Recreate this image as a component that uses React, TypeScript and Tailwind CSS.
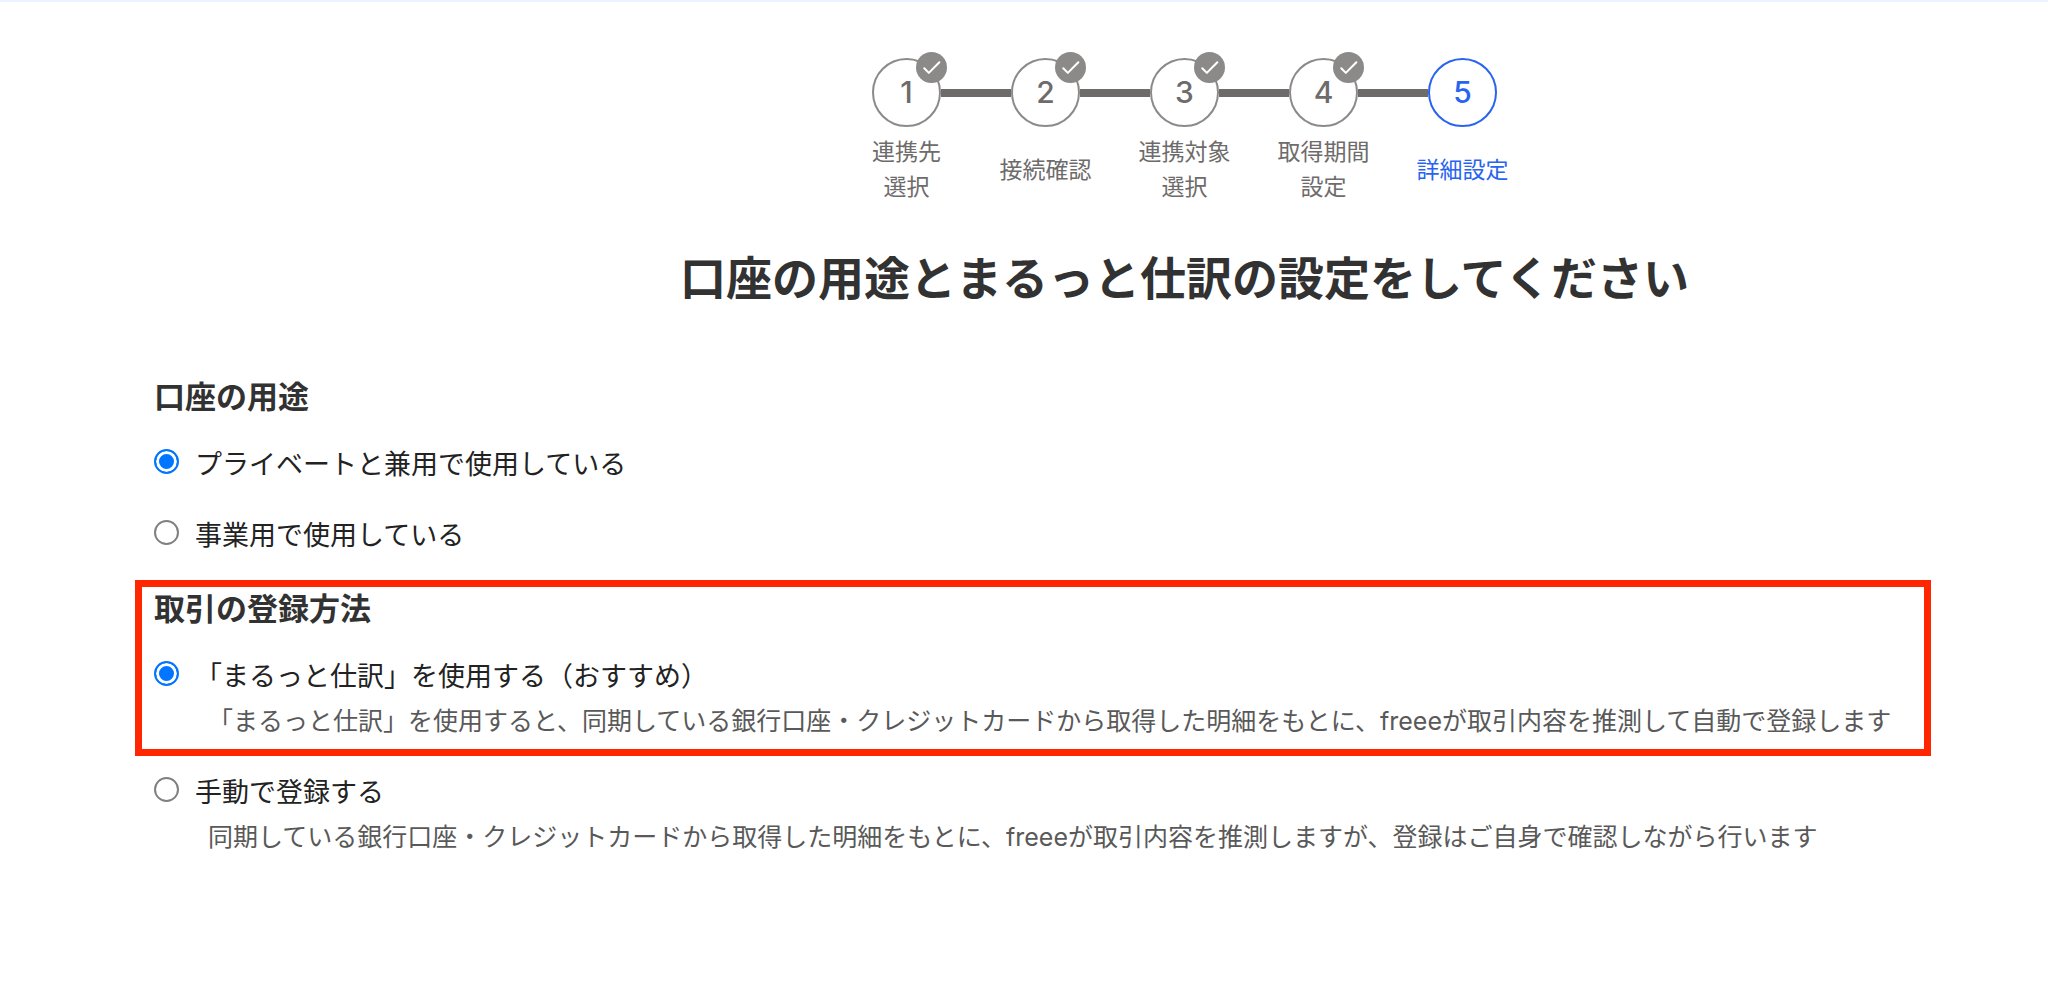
import { ReactNode, useId, useState } from "react";

type Step = { label: string[]; done: boolean };

const steps: Step[] = [
  { label: ["連携先", "選択"], done: true },
  { label: ["接続確認"], done: true },
  { label: ["連携対象", "選択"], done: true },
  { label: ["取得期間", "設定"], done: true },
  { label: ["詳細設定"], done: false },
];

function Brand() {
  return <span className="font-['Inter',sans-serif]">freee</span>;
}

function StepItem({ step, index }: { step: Step; index: number }) {
  const tone = step.done ? "border-[#8c8989] text-[#6e6b6b]" : "border-[#2864f0] text-[#2864f0]";
  return (
    <li
      aria-current={step.done ? undefined : "step"}
      className="flex w-[139px] flex-col items-center gap-1.5"
    >
      <div className="flex w-full items-center">
        <span className={index > 0 ? "h-2 flex-1 bg-[#6e6b6b]" : "h-2 flex-1"} />
        <span
          className={`relative flex size-[69px] items-center justify-center rounded-full border-2 font-['Inter',sans-serif] text-[30px] font-medium ${tone}`}
        >
          {index + 1}
          {step.done && (
            <svg
              viewBox="0 0 30 30"
              aria-hidden="true"
              className="absolute -top-2 -right-2 size-[31px]"
            >
              <circle cx="15" cy="15" r="15" fill="#8c8989" />
              <path
                d="M8 15.8 L12.4 20.2 L22.6 10"
                fill="none"
                stroke="#fff"
                strokeWidth="2"
                strokeLinecap="round"
                strokeLinejoin="round"
              />
            </svg>
          )}
        </span>
        <span className={step.done ? "h-2 flex-1 bg-[#6e6b6b]" : "h-2 flex-1"} />
      </div>
      <span
        className={`flex h-[70px] flex-col items-center justify-center text-[23px] leading-[35px] ${
          step.done ? "text-[#6e6b6b]" : "text-[#2864f0]"
        }`}
      >
        {step.label.map((line) => (
          <span key={line}>{line}</span>
        ))}
      </span>
    </li>
  );
}

type OptionProps = {
  name: string;
  checked: boolean;
  onSelect: () => void;
  label: string;
  children?: ReactNode;
};

function Option({ name, checked, onSelect, label, children }: OptionProps) {
  const id = useId();
  return (
    <div>
      <div className="flex items-center gap-4">
        <input
          type="radio"
          id={id}
          name={name}
          checked={checked}
          onChange={onSelect}
          aria-describedby={children ? `${id}-note` : undefined}
          className="size-[25px] shrink-0 appearance-none rounded-full border-2 border-[#808080] bg-white checked:border-[#0075ff] checked:bg-[#0075ff] checked:shadow-[inset_0_0_0_3px_#fff]"
        />
        <label htmlFor={id} className="pt-1 text-[27px] leading-10 text-[#222222]">
          {label}
        </label>
      </div>
      {children && (
        <p id={`${id}-note`} className="mt-1 pl-[54px] text-[25px] leading-10 text-[#595959]">
          {children}
        </p>
      )}
    </div>
  );
}

export default function App() {
  const [usage, setUsage] = useState("shared");
  const [method, setMethod] = useState("auto");

  return (
    <main className="min-h-screen border-t-2 border-[#ebf1ff] bg-white pt-14 pb-20 font-['Noto_Sans_CJK_JP',sans-serif] text-[#323232]">
      <header className="flex flex-col items-center pl-[321px]">
        <ol className="flex">
          {steps.map((step, i) => (
            <StepItem key={i} step={step} index={i} />
          ))}
        </ol>
        <h1 className="mt-10 text-[46px] leading-[64px] font-bold">
          口座の用途とまるっと仕訳の設定をしてください
        </h1>
      </header>

      <section className="mt-17 pl-[154px]" role="radiogroup" aria-labelledby="usage-title">
        <h2 id="usage-title" className="text-[31px] leading-10 font-bold">
          口座の用途
        </h2>
        <div className="mt-6 flex flex-col gap-[27px]">
          <Option
            name="usage"
            label="プライベートと兼用で使用している"
            checked={usage === "shared"}
            onSelect={() => setUsage("shared")}
          />
          <Option
            name="usage"
            label="事業用で使用している"
            checked={usage === "business"}
            onSelect={() => setUsage("business")}
          />
        </div>
      </section>

      <section className="mt-[26px]" role="radiogroup" aria-labelledby="method-title">
        <div className="mr-[117px] ml-[135px] border-[7px] border-[#ff2600] pb-2 pl-3">
          <h2 id="method-title" className="text-[31px] leading-10 font-bold">
            取引の登録方法
          </h2>
          <div className="mt-6">
            <Option
              name="method"
              label="「まるっと仕訳」を使用する（おすすめ）"
              checked={method === "auto"}
              onSelect={() => setMethod("auto")}
            >
              「まるっと仕訳」を使用すると、同期している銀行口座・クレジットカードから取得した明細をもとに、
              <Brand />
              が取引内容を推測して自動で登録します
            </Option>
          </div>
        </div>
        <div className="mt-[11px] pl-[154px]">
          <Option
            name="method"
            label="手動で登録する"
            checked={method === "manual"}
            onSelect={() => setMethod("manual")}
          >
            同期している銀行口座・クレジットカードから取得した明細をもとに、
            <Brand />
            が取引内容を推測しますが、登録はご自身で確認しながら行います
          </Option>
        </div>
      </section>
    </main>
  );
}
